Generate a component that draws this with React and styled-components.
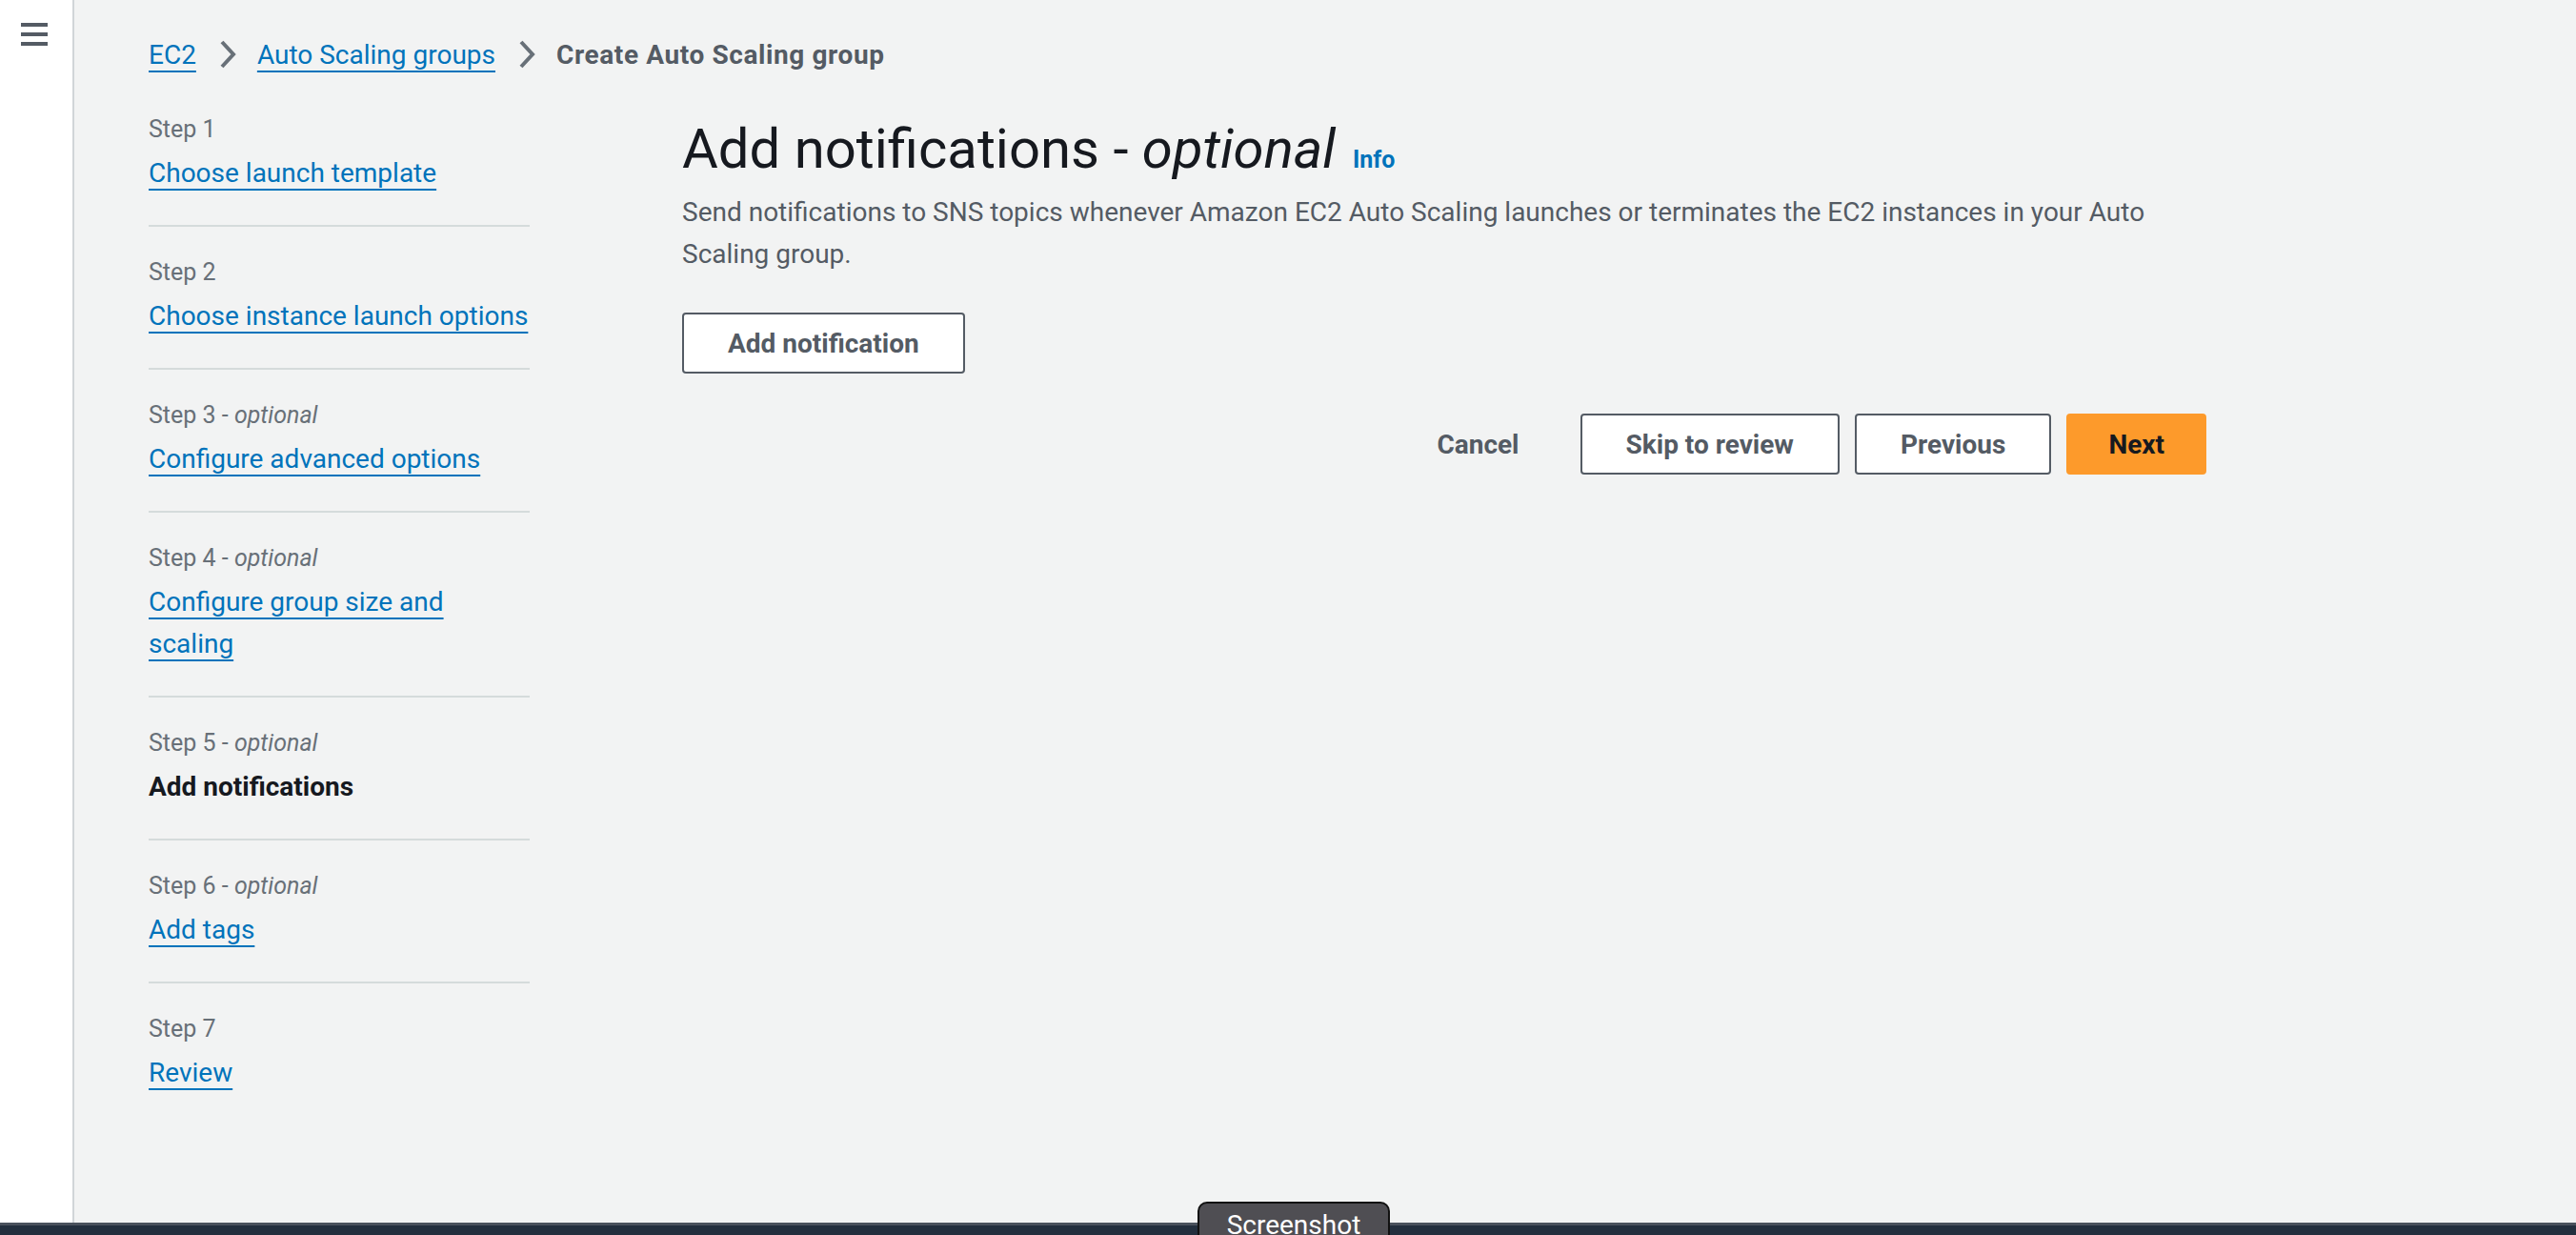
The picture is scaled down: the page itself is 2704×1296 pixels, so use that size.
import React from 'react';
import styled, { createGlobalStyle } from 'styled-components';

const GlobalStyle = createGlobalStyle`
  html, body {
    margin: 0;
    padding: 0;
    background: #f2f3f3;
    font-family: Roboto, "Liberation Sans", sans-serif;
  }
  * {
    box-sizing: border-box;
  }
`;

const steps = [
  { n: 1, title: 'Choose launch template' },
  { n: 2, title: 'Choose instance launch options' },
  { n: 3, title: 'Configure advanced options', optional: true },
  { n: 4, title: 'Configure group size and scaling', optional: true },
  { n: 5, title: 'Add notifications', optional: true, current: true },
  { n: 6, title: 'Add tags', optional: true },
  { n: 7, title: 'Review' },
];

const Chevron = () => (
  <svg width="18" height="30" viewBox="0 0 18 30" fill="none">
    <path d="M3 2 L15 15 L3 28" stroke="#687078" strokeWidth="4" />
  </svg>
);

const Hamburger = () => (
  <svg width="28" height="24" viewBox="0 0 28 24">
    <rect x="0" y="0" width="28" height="4" fill="#545b64" />
    <rect x="0" y="10" width="28" height="4" fill="#545b64" />
    <rect x="0" y="20" width="28" height="4" fill="#545b64" />
  </svg>
);

const App = () => (
  <>
    <GlobalStyle />
    <Shell>
      <Page>
        <Rail>
          <Hamburger />
        </Rail>
        <Main>
          <Breadcrumbs>
            <Crumb href="#">EC2</Crumb>
            <Sep><Chevron /></Sep>
            <Crumb href="#">Auto Scaling groups</Crumb>
            <Sep><Chevron /></Sep>
            <CrumbCurrent>Create Auto Scaling group</CrumbCurrent>
          </Breadcrumbs>
          <Layout>
            <StepList>
              {steps.map((s) => (
                <StepItem key={s.n}>
                  <StepLabel>
                    Step {s.n}
                    {s.optional && <> - <em>optional</em></>}
                  </StepLabel>
                  {s.current ? (
                    <StepCurrent>{s.title}</StepCurrent>
                  ) : (
                    <StepLink href="#">{s.title}</StepLink>
                  )}
                </StepItem>
              ))}
            </StepList>
            <Content>
              <Heading>
                Add notifications - <em>optional</em>
                <Info href="#">Info</Info>
              </Heading>
              <Description>
                Send notifications to SNS topics whenever Amazon EC2 Auto Scaling launches or terminates the EC2 instances in your Auto Scaling group.
              </Description>
              <div>
                <Button type="button">Add notification</Button>
              </div>
              <Actions>
                <Button type="button" variant="link">Cancel</Button>
                <Button type="button">Skip to review</Button>
                <Button type="button">Previous</Button>
                <Button type="button" variant="primary">Next</Button>
              </Actions>
            </Content>
          </Layout>
        </Main>
      </Page>
      <TaskBar />
      <ShotTip>Screenshot</ShotTip>
    </Shell>
  </>
);

const Shell = styled.div`
  position: relative;
  height: 1296px;
  display: flex;
  flex-direction: column;
  overflow: hidden;
`;

const Page = styled.div`
  flex: 1;
  display: flex;
  min-height: 0;
`;

const Rail = styled.div`
  width: 78px;
  flex-shrink: 0;
  background: #ffffff;
  border-right: 2px solid #d1d5d8;
  padding: 24px 0 0 22px;
`;

const Main = styled.main`
  flex: 1;
  padding: 35px 0 0 78px;
`;

const Breadcrumbs = styled.nav`
  display: flex;
  align-items: center;
  height: 44px;
  font-size: 28px;
`;

const Crumb = styled.a`
  color: #0073bb;
  text-decoration: underline;
  text-decoration-thickness: 2px;
  text-underline-offset: 7px;
`;

const CrumbCurrent = styled.span`
  color: #545b64;
  font-weight: 700;
  letter-spacing: 0.6px;
`;

const Sep = styled.span`
  display: flex;
  margin: 0 22px 0 24px;
`;

const Layout = styled.div`
  display: grid;
  grid-template-columns: 400px 1600px;
  column-gap: 160px;
  margin-top: 41px;
  align-items: start;
`;

const StepList = styled.ul`
  list-style: none;
  margin: 0;
  padding: 0;
`;

const StepItem = styled.li`
  display: flex;
  flex-direction: column;
  gap: 8px;
  padding: 32px 0;
  border-bottom: 2px solid #d5dbdb;

  &:first-child {
    padding-top: 0;
  }
  &:last-child {
    border-bottom: none;
  }
`;

const StepLabel = styled.div`
  font-size: 25px;
  line-height: 32px;
  color: #687078;

  em {
    font-style: italic;
  }
`;

const StepLink = styled.a`
  font-size: 28px;
  line-height: 44px;
  color: #0073bb;
  text-decoration: underline;
  text-decoration-thickness: 2px;
  text-underline-offset: 7px;
`;

const StepCurrent = styled.span`
  font-size: 28px;
  line-height: 44px;
  font-weight: 700;
  color: #16191f;
`;

const Content = styled.div`
  display: flex;
  flex-direction: column;
`;

const Heading = styled.h1`
  margin: 0;
  font-size: 58px;
  line-height: 72px;
  font-weight: 400;
  color: #16191f;

  em {
    font-style: italic;
  }
`;

const Info = styled.a`
  margin-left: 18px;
  font-size: 25px;
  font-weight: 700;
  color: #0073bb;
  text-decoration: none;
`;

const Description = styled.p`
  margin: -3px 0 39px;
  max-width: 1600px;
  font-size: 28px;
  line-height: 44px;
  color: #545b64;
`;

const Button = styled.button`
  height: 64px;
  padding: 0 ${(p) => (p.variant === 'primary' ? '42px' : '46px')};
  font-family: inherit;
  font-size: 28px;
  font-weight: 700;
  border-radius: 4px;
  cursor: pointer;
  color: ${(p) => (p.variant === 'primary' ? '#16191f' : '#545b64')};
  background: ${(p) => (p.variant === 'primary' ? '#fd9a2b' : p.variant === 'link' ? 'transparent' : '#ffffff')};
  border: 2px solid ${(p) => (p.variant === 'primary' ? '#fd9a2b' : p.variant === 'link' ? 'transparent' : '#545b64')};
`;

const Actions = styled.div`
  display: flex;
  justify-content: flex-end;
  gap: 16px;
  margin-top: 42px;
`;

const TaskBar = styled.div`
  height: 13px;
  flex-shrink: 0;
  background: #232f3e;
  border-top: 3px solid #4a525d;
`;

const ShotTip = styled.div`
  position: absolute;
  left: 1257px;
  top: 1261px;
  width: 202px;
  height: 70px;
  padding-top: 6px;
  text-align: center;
  background: #4f4e53;
  border: 2px solid #111111;
  border-radius: 10px;
  color: #ffffff;
  font-size: 28px;
`;

export default App;
